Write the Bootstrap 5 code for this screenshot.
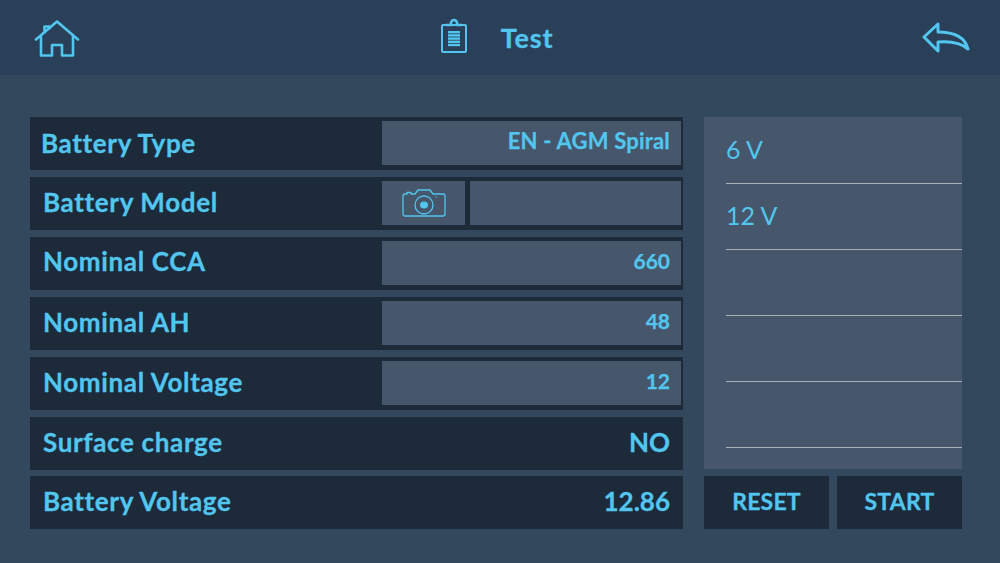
<!DOCTYPE html>
<html lang="en">
<head>
<meta charset="utf-8">
<title>Test</title>
<link rel="stylesheet" href="https://cdn.jsdelivr.net/npm/bootstrap@5.3.0/dist/css/bootstrap.min.css">
<style>
html,body{height:563px;overflow:hidden}
body{background:#34485d;color:#52c6ee;font-family:Lato,"Liberation Sans",sans-serif}
.topbar{height:75px;background:#2a3f58;padding:0 30px}
.topslot{width:50px}
.topslot.backslot{width:56px}
.clipicon{margin-top:-3px}
.toptitle{font-size:27px;font-weight:700;margin-left:34px;line-height:1;letter-spacing:.8px;-webkit-text-stroke:.3px #52c6ee}
.mainarea{padding:42px 38px 0 30px;gap:21px}
.leftcol{width:653px;height:412px;gap:7px}
.datarow{height:53px;flex:none;background:#1c2a3a;padding:4px 2px 5px 0}
.datarow.lastrow{margin-top:-1px}
.rowlabel{width:352px;flex:none;padding:0 0 2px 13px;font-size:26px;font-weight:700;line-height:1;white-space:nowrap;letter-spacing:.65px;-webkit-text-stroke:.3px #52c6ee}
.rowlabel.first{padding:0 0 1px 11px}
.rowlabel.lifted{padding-bottom:5px}
.fieldbox{background:#46566b;height:44px;font-size:21px;font-weight:700;padding:0 11px 5px;-webkit-text-stroke:.25px #52c6ee}
.fieldbox.textwide{font-size:22px;letter-spacing:.2px}
.camcell{width:83px;flex:none;margin-right:5px;padding:0}
.bigvalue{font-size:26px;font-weight:700;padding:0 11px 2px 0;-webkit-text-stroke:.3px #52c6ee}
.rightcol{width:258px}
.voltpanel{height:352px;background:#46566b;padding:1px 0 0 22px}
.voltitem{height:66px;border-bottom:1px solid #a9b0ba;font-size:25px;line-height:1;padding-bottom:2px}
.actionbtn{width:125px;height:53px;background:#1c2a3a;color:#52c6ee;font-size:23px;font-weight:700;border:0;border-radius:0;padding:0 0 2px;letter-spacing:.2px;-webkit-text-stroke:.3px #52c6ee}
.actionbtn:hover{background:#1c2a3a;color:#52c6ee}
</style>
</head>
<body>
<header class="topbar d-flex align-items-center justify-content-between">
  <div class="topslot">
    <svg width="46" height="40" viewBox="0 0 46 40" fill="none" stroke="#52c6ee" stroke-width="2.600" stroke-linejoin="round" stroke-linecap="round" class="d-block ms-1 mt-1">
      <path d="M2 19.500 L23 1.500 L44 19.500 M10.500 12.500 V6.500 H15.500 V8.500"/>
      <path d="M7 16.500 V35.500 H18 V25 H28 V35.500 H39 V16.500"/>
    </svg>
  </div>
  <div class="d-flex align-items-center">
    <svg width="26" height="36" viewBox="0 0 26 36" fill="none" stroke="#52c6ee" stroke-width="2" class="d-block clipicon">
      <rect x="1" y="7" width="24" height="27" rx="1"/>
      <path d="M5 7 H9.500 L10 5 A3 3 0 1 1 16 5 L16.500 7 H21" stroke-width="2.600"/>
      <rect x="7" y="13" width="12" height="2.400" fill="#52c6ee" stroke="none"/>
      <rect x="7" y="16.200" width="12" height="2.400" fill="#52c6ee" stroke="none"/>
      <rect x="7" y="19.400" width="12" height="2.400" fill="#52c6ee" stroke="none"/>
      <rect x="7" y="22.600" width="12" height="2.400" fill="#52c6ee" stroke="none"/>
      <rect x="7" y="25.800" width="12" height="2.400" fill="#52c6ee" stroke="none"/>
    </svg>
    <span class="toptitle">Test</span>
  </div>
  <div class="topslot backslot d-flex justify-content-end">
    <svg width="48" height="32" viewBox="0 0 48 32" fill="none" stroke="#52c6ee" stroke-width="3" stroke-linejoin="round" stroke-linecap="round" class="d-block">
      <path d="M2 15 L16 2 V10 C32 10 43 15 46 27 C38 20 28 19 16 20 V29 Z"/>
    </svg>
  </div>
</header>

<main class="mainarea d-flex">
  <div class="leftcol d-flex flex-column">
    <div class="datarow d-flex align-items-center">
      <div class="rowlabel first">Battery Type</div>
      <div class="fieldbox textwide flex-grow-1 d-flex align-items-center justify-content-end">EN - AGM Spiral</div>
    </div>
    <div class="datarow d-flex align-items-center">
      <div class="rowlabel">Battery Model</div>
      <div class="fieldbox camcell d-flex align-items-center justify-content-center">
        <svg width="44" height="28" viewBox="0 0 44 28" fill="none" stroke="#52c6ee" stroke-width="1.300" stroke-linejoin="round" class="d-block">
          <path d="M3 5 H5 V3.500 H9 V5 H13 L16 1 H28 L31 5 H41 Q43 5 43 7 V25 Q43 27 41 27 H3 Q1 27 1 25 V7 Q1 5 3 5 Z"/>
          <circle cx="22" cy="16" r="9"/>
          <ellipse cx="22" cy="16" rx="4" ry="3.500" fill="#52c6ee" stroke="none"/>
          <circle cx="34" cy="8" r=".7" fill="#52c6ee" stroke="none"/>
        </svg>
      </div>
      <div class="fieldbox flex-grow-1"></div>
    </div>
    <div class="datarow d-flex align-items-center">
      <div class="rowlabel lifted">Nominal CCA</div>
      <div class="fieldbox flex-grow-1 d-flex align-items-center justify-content-end">660</div>
    </div>
    <div class="datarow d-flex align-items-center">
      <div class="rowlabel">Nominal AH</div>
      <div class="fieldbox flex-grow-1 d-flex align-items-center justify-content-end">48</div>
    </div>
    <div class="datarow d-flex align-items-center">
      <div class="rowlabel">Nominal Voltage</div>
      <div class="fieldbox flex-grow-1 d-flex align-items-center justify-content-end">12</div>
    </div>
    <div class="datarow d-flex align-items-center">
      <div class="rowlabel">Surface charge</div>
      <div class="bigvalue flex-grow-1 text-end">NO</div>
    </div>
    <div class="datarow lastrow d-flex align-items-center">
      <div class="rowlabel">Battery Voltage</div>
      <div class="bigvalue flex-grow-1 text-end">12.86</div>
    </div>
  </div>
  <div class="rightcol d-flex flex-column justify-content-between">
    <div class="voltpanel">
      <div class="voltitem d-flex align-items-center">6 V</div>
      <div class="voltitem d-flex align-items-center">12 V</div>
      <div class="voltitem"></div>
      <div class="voltitem"></div>
      <div class="voltitem"></div>
    </div>
    <div class="d-flex justify-content-between">
      <button class="btn actionbtn" type="button">RESET</button>
      <button class="btn actionbtn" type="button">START</button>
    </div>
  </div>
</main>
</body>
</html>
